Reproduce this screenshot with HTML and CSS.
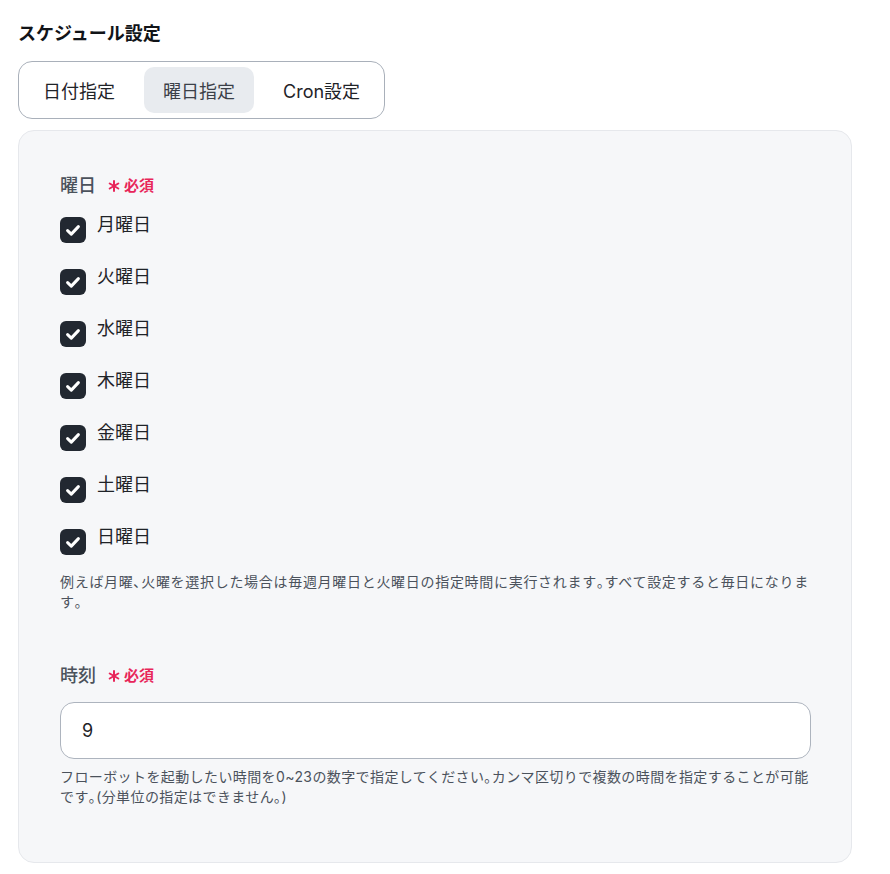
FILE: index.html
```html
<!DOCTYPE html>
<html lang="ja">
<head>
<meta charset="utf-8">
<link rel="stylesheet" href="styles.css">
</head>
<body>
<div class="page">
  <h2 class="title">スケジュール設定</h2>
  <div class="tabs">
    <div class="tab">日付指定</div>
    <div class="tab active">曜日指定</div>
    <div class="tab">Cron設定</div>
  </div>
  <div class="panel">
    <div class="field">
      <div class="label">曜日<span class="req"><svg class="ast" viewBox="0 0 12 12"><g stroke="currentColor" stroke-width="2" stroke-linecap="round"><line x1="6" y1="1" x2="6" y2="11"/><line x1="1.7" y1="3.5" x2="10.3" y2="8.5"/><line x1="1.7" y1="8.5" x2="10.3" y2="3.5"/></g></svg>必須</span></div>
      <div class="checks">
        <label class="check"><span class="box"><svg viewBox="0 0 26 26"><path d="M7.6 13.6l3.7 3.5 7.1-7.5" fill="none" stroke="#fff" stroke-width="3" stroke-linecap="round" stroke-linejoin="round"/></svg></span><span class="ctext">月曜日</span></label>
        <label class="check"><span class="box"><svg viewBox="0 0 26 26"><path d="M7.6 13.6l3.7 3.5 7.1-7.5" fill="none" stroke="#fff" stroke-width="3" stroke-linecap="round" stroke-linejoin="round"/></svg></span><span class="ctext">火曜日</span></label>
        <label class="check"><span class="box"><svg viewBox="0 0 26 26"><path d="M7.6 13.6l3.7 3.5 7.1-7.5" fill="none" stroke="#fff" stroke-width="3" stroke-linecap="round" stroke-linejoin="round"/></svg></span><span class="ctext">水曜日</span></label>
        <label class="check"><span class="box"><svg viewBox="0 0 26 26"><path d="M7.6 13.6l3.7 3.5 7.1-7.5" fill="none" stroke="#fff" stroke-width="3" stroke-linecap="round" stroke-linejoin="round"/></svg></span><span class="ctext">木曜日</span></label>
        <label class="check"><span class="box"><svg viewBox="0 0 26 26"><path d="M7.6 13.6l3.7 3.5 7.1-7.5" fill="none" stroke="#fff" stroke-width="3" stroke-linecap="round" stroke-linejoin="round"/></svg></span><span class="ctext">金曜日</span></label>
        <label class="check"><span class="box"><svg viewBox="0 0 26 26"><path d="M7.6 13.6l3.7 3.5 7.1-7.5" fill="none" stroke="#fff" stroke-width="3" stroke-linecap="round" stroke-linejoin="round"/></svg></span><span class="ctext">土曜日</span></label>
        <label class="check"><span class="box"><svg viewBox="0 0 26 26"><path d="M7.6 13.6l3.7 3.5 7.1-7.5" fill="none" stroke="#fff" stroke-width="3" stroke-linecap="round" stroke-linejoin="round"/></svg></span><span class="ctext">日曜日</span></label>
      </div>
      <p class="help help-days">例えば月曜､火曜を選択した場合は毎週月曜日と火曜日の指定時間に実行されます｡すべて設定すると毎日になります｡</p>
    </div>
    <div class="field field-time">
      <div class="label">時刻<span class="req"><svg class="ast" viewBox="0 0 12 12"><g stroke="currentColor" stroke-width="2" stroke-linecap="round"><line x1="6" y1="1" x2="6" y2="11"/><line x1="1.7" y1="3.5" x2="10.3" y2="8.5"/><line x1="1.7" y1="8.5" x2="10.3" y2="3.5"/></g></svg>必須</span></div>
      <div class="input">9</div>
      <p class="help help-time">フローボットを起動したい時間を0~23の数字で指定してください｡カンマ区切りで複数の時間を指定することが可能です｡(分単位の指定はできません｡)</p>
    </div>
  </div>
</div>
</body>
</html>
```

FILE: styles.css
```css
* { box-sizing: border-box; }
html, body { margin: 0; padding: 0; background: #ffffff; }
body {
  font-family: "Inter", "Noto Sans CJK JP", sans-serif;
  color: #1f2328;
}
.page {
  width: 890px;
  padding: 20px 38px 10px 18px;
}
.title {
  margin: 0;
  font-size: 18px;
  line-height: 27px;
  font-weight: 700;
  color: #111418;
}
.tabs {
  display: inline-flex;
  gap: 10px;
  margin-top: 14px;
  padding: 5px;
  border: 1px solid #a9b0ba;
  border-radius: 14px;
  background: #fff;
}
.tab {
  height: 46px;
  padding: 0 19px;
  display: flex;
  align-items: center;
  font-size: 18px;
  border-radius: 10px;
  color: #1f2328;
}
.tab.active {
  background: #e8ebef;
  color: #3b4048;
}
.panel {
  margin-top: 11px;
  background: #f6f7f9;
  border: 1px solid #e6e8ec;
  border-radius: 16px;
  padding: 41px 40px 55px 41px;
}
.label {
  display: flex;
  align-items: center;
  font-size: 18px;
  line-height: 27px;
  color: #4b525c;
  font-weight: 500;
}
.req {
  display: inline-flex;
  align-items: center;
  margin-left: 12px;
  font-size: 15px;
  font-weight: 700;
  color: #e8265a;
}
.ast {
  width: 12px;
  height: 12px;
  margin-right: 4px;
}
.checks {
  margin-top: 12px;
  display: flex;
  flex-direction: column;
  gap: 20px;
}
.check {
  display: flex;
  align-items: flex-start;
}
.box {
  width: 26px;
  height: 26px;
  margin-top: 6px;
  border-radius: 6px;
  background: #222831;
  flex: none;
}
.box svg { width: 26px; height: 26px; display: block; }
.ctext {
  margin-left: 11px;
  font-size: 18px;
  line-height: 27px;
  color: #1f2328;
}
.help {
  margin: 17px 0 0;
  font-size: 14px;
  line-height: 20px;
  color: #4b525c;
}
.help-days { letter-spacing: 0.7px; }
.help-time { letter-spacing: 0.4px; }
.field-time { margin-top: 50px; }
.field-time .help { margin-top: 8px; }
.input {
  margin-top: 13px;
  height: 57px;
  background: #fff;
  border: 1px solid #adb4be;
  border-radius: 14px;
  padding: 0 21px;
  display: flex;
  align-items: center;
  font-size: 18px;
  color: #1f2328;
}
```
